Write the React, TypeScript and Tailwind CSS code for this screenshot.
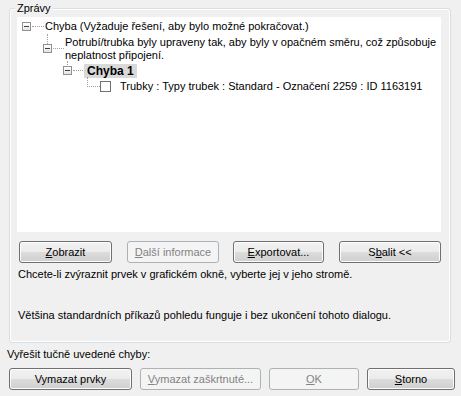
import React from 'react';

const btn =
  'h-[22px] rounded-[3px] border border-[#707070] bg-[linear-gradient(#f2f2f2_0%,#ebebeb_50%,#dddddd_50%,#cfcfcf_100%)] shadow-[inset_0_0_0_1px_#fcfcfc] text-[11px] text-black flex items-center justify-center';
const btnOff =
  'h-[22px] rounded-[3px] border border-[#adb2b5] bg-[#f4f4f4] text-[11px] text-[#838383] flex items-center justify-center';

function Expander() {
  return (
    <div className="w-[9px] h-[9px] border border-[#919191] bg-[linear-gradient(#ffffff,#e4e4e4)] flex items-center justify-center shrink-0">
      <div className="w-[5px] h-px bg-[#404040]" />
    </div>
  );
}

function HDots({ w }: { w: string }) {
  return <div className={`${w} border-t border-dotted border-[#a0a0a0] shrink-0`} />;
}

export default function App() {
  return (
    <div
      className="w-[461px] h-[396px] bg-[#f0f0f0] text-black text-[11px] leading-[13px] overflow-hidden"
      style={{ fontFamily: '"Liberation Sans", Arial, sans-serif' }}
    >
      {/* Zprávy group */}
      <div className="relative ml-[9px] mt-[8px] w-[442px] h-[335px] border border-[#d5dfe5] rounded-[3px] shadow-[inset_0_0_0_1px_#ffffff]">
        <div className="absolute left-[5px] -top-[7px] px-[2px] bg-[#f0f0f0] leading-[13px]">Zprávy</div>

        {/* tree */}
        <div className="ml-[7px] mt-[8px] w-[424px] h-[215px] bg-white pt-px">
          {/* row 1 */}
          <div className="flex items-center h-[16px] pl-[5px]">
            <Expander />
            <HDots w="w-[12px] ml-px" />
            <span className="ml-px">Chyba (Vyžaduje řešení, aby bylo možné pokračovat.)</span>
          </div>
          {/* row 2 */}
          <div className="relative flex items-center h-[29px] pl-[26px]">
            <div className="absolute left-[30px] top-0 h-[10px] border-l border-dotted border-[#a0a0a0]" />
            <Expander />
            <HDots w="w-[11px] ml-px" />
            <span className="ml-px leading-[13px]">
              Potrubí/trubka byly upraveny tak, aby byly v opačném směru, což způsobuje
              <br />
              neplatnost připojení.
            </span>
          </div>
          {/* row 3 */}
          <div className="relative flex items-center h-[15px] pl-[46px]">
            <div className="absolute left-[50px] -top-[2px] h-[6px] border-l border-dotted border-[#a0a0a0]" />
            <Expander />
            <HDots w="w-[10px] ml-px" />
            <span className="ml-px px-[3px] bg-[#d9d9d9] font-bold text-[12px] leading-[14px]">Chyba 1</span>
          </div>
          {/* row 4 */}
          <div className="relative flex items-center h-[17px] pl-[70px]">
            <div className="absolute left-[70px] -top-px h-[10px] border-l border-dotted border-[#a0a0a0]" />
            <HDots w="w-[13px]" />
            <div className="w-[11px] h-[11px] border border-[#707070] bg-white shrink-0" />
            <span className="ml-[9px]">Trubky : Typy trubek : Standard - Označení 2259 : ID 1163191</span>
          </div>
        </div>

        {/* button row */}
        <div className="flex mt-[9px] ml-[9px]">
          <div className={`${btn} w-[93px]`}>
            <span><u>Z</u>obrazit</span>
          </div>
          <div className={`${btnOff} w-[92px] ml-[15px]`}>
            <span><u>D</u>alší informace</span>
          </div>
          <div className={`${btn} w-[91px] ml-[14px]`}>
            <span><u>E</u>xportovat...</span>
          </div>
          <div className={`${btn} w-[102px] ml-[15px]`}>
            <span>S<u>b</u>alit &lt;&lt;</span>
          </div>
        </div>

        <p className="mt-[5px] ml-[8px]">Chcete-li zvýraznit prvek v grafickém okně, vyberte jej v jeho stromě.</p>
        <p className="mt-[28px] ml-[8px]">Většina standardních příkazů pohledu funguje i bez ukončení tohoto dialogu.</p>
      </div>

      <p className="mt-[5px] ml-[7px]">Vyřešit tučně uvedené chyby:</p>
      <div className="flex mt-[7px] ml-[9px]">
        <div className={`${btn} w-[123px]`}>Vymazat prvky</div>
        <div className={`${btnOff} w-[121px] ml-[8px]`}>
          <span><u>V</u>ymazat zaškrtnuté...</span>
        </div>
        <div className={`${btnOff} w-[90px] ml-[8px]`}>
          <span><u>O</u>K</span>
        </div>
        <div className={`${btn} w-[88px] ml-[8px]`}>
          <span><u>S</u>torno</span>
        </div>
      </div>
    </div>
  );
}
